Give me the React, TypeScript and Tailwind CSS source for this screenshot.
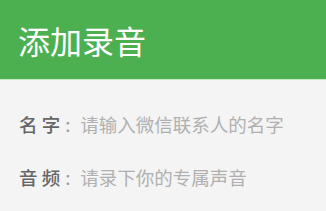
const font = { fontFamily: '"Noto Sans CJK SC", "Noto Sans", sans-serif' };

function Row({ label, placeholder }: { label: string; placeholder: string }) {
  return (
    <div className="flex h-[53px] items-center pl-[19px] text-[18.5px]">
      <span className="font-medium text-[#666666]">{label}</span>
      <span className="px-[5px] text-[#9a9a9a]">:</span>
      <span className="ml-[5px] text-[#b0b0b0]">{placeholder}</span>
    </div>
  );
}

export default function App() {
  return (
    <div className="h-[211px] w-[326px] overflow-hidden bg-[#f4f4f4]" style={font}>
      <div className="flex h-[80px] items-center border-b border-[#c8e6c9] bg-[#4caf50] pl-[18px]">
        <span className="text-[32px] leading-none text-white">添加录音</span>
      </div>
      <div className="pt-[18px]">
        <Row label="名 字" placeholder="请输入微信联系人的名字" />
        <Row label="音 频" placeholder="请录下你的专属声音" />
      </div>
    </div>
  );
}
